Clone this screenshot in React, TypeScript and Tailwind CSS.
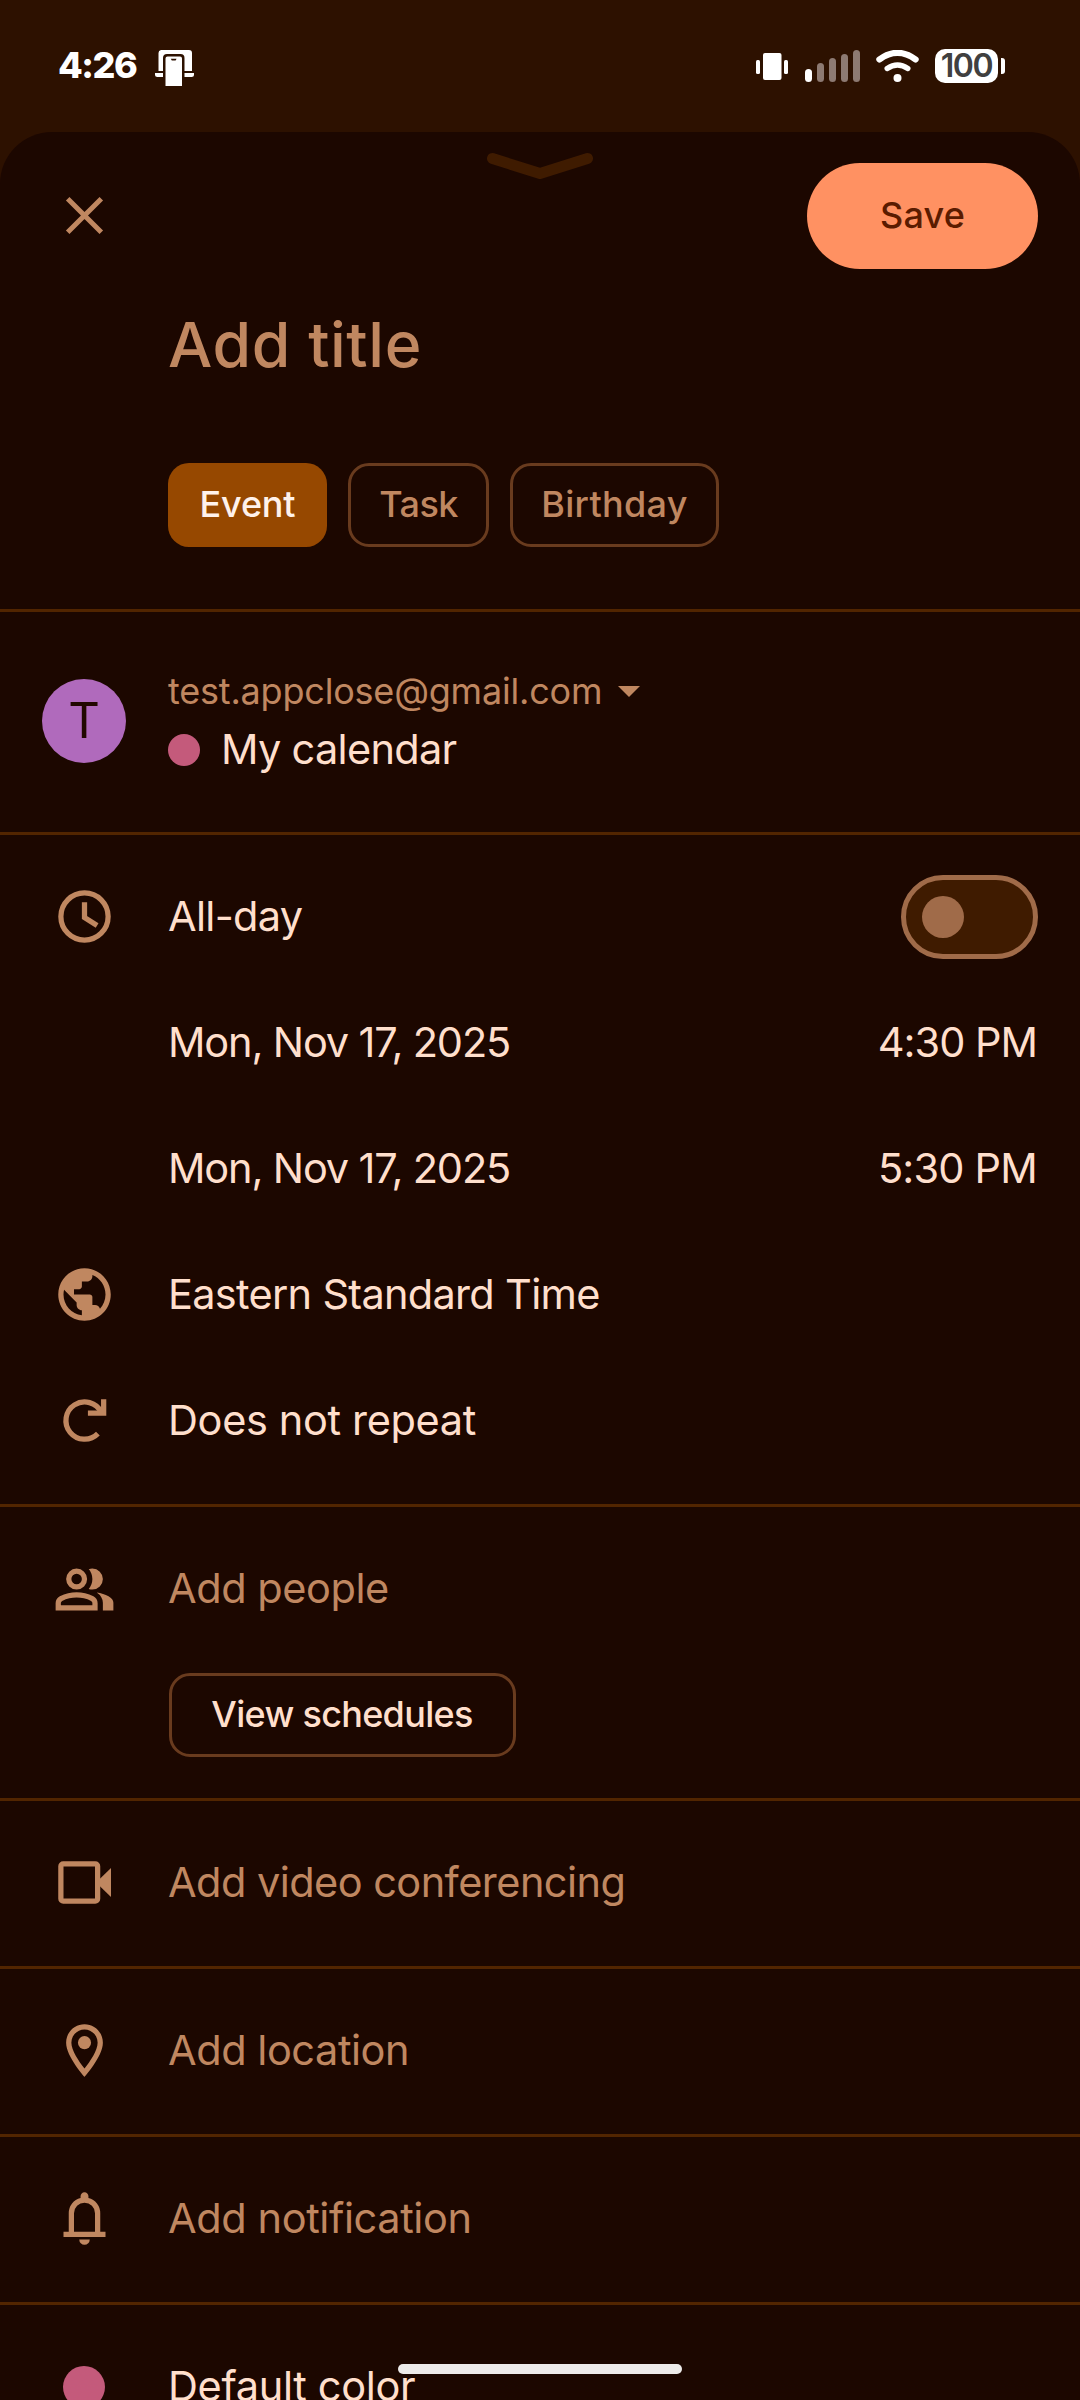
import type { ReactNode } from 'react';

const iconClass = 'block h-[63px] w-[63px] shrink-0 overflow-visible';

function FilledIcon({ d, children }: { d?: string; children?: ReactNode }) {
  return (
    <svg viewBox="0 0 24 24" className={iconClass} fill="currentColor">
      {d && <path fillRule="evenodd" d={d} />}
      {children}
    </svg>
  );
}

const ClockIcon = () => (
  <svg viewBox="0 0 24 24" className={iconClass} fill="none" stroke="currentColor" strokeWidth="2">
    <circle cx="12" cy="12" r="9" />
    <path d="M12 6.6V12.4L16.8 15.4" />
  </svg>
);

const GlobeIcon = () => (
  <FilledIcon d="M12 2C6.48 2 2 6.48 2 12s4.48 10 10 10 10-4.48 10-10S17.52 2 12 2zm-1 17.93c-3.95-.49-7-3.85-7-7.93 0-.62.08-1.21.21-1.79L9 15v1c0 1.1.9 2 2 2v1.93zm6.9-2.54c-.26-.81-1-1.39-1.9-1.39h-1v-3c0-.55-.45-1-1-1H8v-2h2c.55 0 1-.45 1-1V7h2c1.1 0 2-.9 2-2v-.41c2.93 1.19 5 4.06 5 7.41 0 2.08-.8 3.97-2.1 5.39z" />
);

const RepeatIcon = () => (
  <svg viewBox="0 0 24 24" className={iconClass} fill="none" stroke="currentColor" strokeWidth="2">
    <path d="M17.1 17A7.1 7.1 0 1 1 18.4 8.9" />
    <path d="M19.3 3.9V9.2H13.3" />
  </svg>
);

const PeopleIcon = () => (
  <FilledIcon>
    <path
      transform="translate(0 .4)"
      fillRule="evenodd"
      d="M1 20v-2.8q0-.85.438-1.562T2.6 14.55q1.55-.775 3.15-1.162T9 13t3.25.388 3.15 1.162q.725.375 1.163 1.088T17 17.2V20zm18 0v-3q0-1.1-.612-2.113T16.65 13.15q1.275.15 2.4.513t2.1.887q.9.5 1.375 1.112T23 17v3zM9 12q-1.65 0-2.825-1.175T5 8t1.175-2.825T9 4t2.825 1.175T13 8t-1.175 2.825T9 12m10-4q0 1.65-1.175 2.825T15 12q-.275 0-.7-.062T13.6 11.8q.675-.8 1.038-1.775T15 8t-.362-2.025T13.6 4.2q.35-.125.7-.163T15 4q1.65 0 2.825 1.175T19 8M3 18h12v-.8q0-.275-.137-.5t-.363-.35q-1.35-.675-2.725-1.012T9 15t-2.775.338T3.5 16.35q-.225.125-.362.35T3 17.2zm6-8q.825 0 1.413-.587T11 8t-.587-1.412T9 6t-1.412.588T7 8t.588 1.413T9 10"
    />
  </FilledIcon>
);

const VideoIcon = () => (
  <FilledIcon>
    <rect x="3" y="4.9" width="14" height="14.2" rx=".9" fill="none" stroke="currentColor" strokeWidth="2" />
    <path d="M16.4 12l5.7-5.5v11z" />
  </FilledIcon>
);

const PinIcon = () => (
  <FilledIcon d="M12 2C8.13 2 5 5.13 5 9c0 5.25 7 13 7 13s7-7.75 7-13c0-3.87-3.13-7-7-7zM7 9c0-2.76 2.24-5 5-5s5 2.24 5 5c0 2.88-2.88 7.19-5 9.88C9.92 16.21 7 11.85 7 9z">
    <circle cx="12" cy="9" r="2.5" />
  </FilledIcon>
);

const BellIcon = () => (
  <FilledIcon d="M4 19v-2h2v-7q0-2.075 1.25-3.687T10.5 4.2v-.7q0-.625.438-1.062T12 2t1.063.438T13.5 3.5v.7q2 .5 3.25 2.113T18 10v7h2v2zm8 3q-.825 0-1.412-.587T10 20h4q0 .825-.587 1.413T12 22m-4-5h8v-7q0-1.65-1.175-2.825T12 6 9.175 7.175 8 10z" />
);

function StatusBar() {
  return (
    <div className="flex h-[132px] shrink-0 items-start pl-[58px] pr-[75px] pt-[43px] text-white">
      <span className="w-[97px] text-[36px] font-extrabold leading-[44px] tracking-[-1.5px]">4:26</span>
      <svg className="mt-[7px] block h-[36px] w-[39px]" viewBox="0 0 39 36" fill="#fff">
        <path d="M6 0H34a3 3 0 0 1 3 3V21H29.500V8a4 4 0 0 0-4-4H12a4 4 0 0 0-4 4V21H3.500V3A3 3 0 0 1 6 0z" />
        <path d="M0 23H8V27H2.500A2.500 2.500 0 0 1 0 24.500zM29.500 23H39V24.500A2.500 2.500 0 0 1 36.500 27H29.500z" />
        <path fillRule="evenodd" d="M12.500 6.500H25A2 2 0 0 1 27 8.500V36H10.500V8.500A2 2 0 0 1 12.500 6.500zM15.800 8.700L16.800 10.500H20.600L21.600 8.700z" />
      </svg>
      <div className="ml-auto flex items-start">
        <svg className="mt-[9px] block h-[30px] w-[32px]" viewBox="0 0 32 30" fill="#fff">
          <rect x="0" y="8" width="4" height="14" rx="1.500" />
          <rect x="7" y="1" width="18.500" height="27" rx="2" />
          <rect x="28" y="8" width="4" height="14" rx="1.500" />
        </svg>
        <div className="ml-[17px] mt-[7px] flex h-[32px] items-end gap-[5px]">
          <div className="h-[13px] w-[7px] rounded-full bg-white" />
          <div className="h-[19px] w-[7px] rounded-full bg-[#8d7a72]" />
          <div className="h-[24px] w-[7px] rounded-full bg-[#8d7a72]" />
          <div className="h-[28px] w-[7px] rounded-full bg-[#8d7a72]" />
          <div className="h-[32px] w-[7px] rounded-full bg-[#8d7a72]" />
        </div>
        <svg className="ml-[16px] mt-[7px] block h-[32px] w-[43px]" viewBox="0 0 43 32" fill="none" stroke="#fff" strokeLinecap="round">
          <path d="M3.400 9.500Q21.500-3.800 39.600 9.500" strokeWidth="6.200" />
          <path d="M11.200 18.500Q21.500 11.500 31.800 18.500" strokeWidth="5.400" />
          <circle cx="21.500" cy="28" r="4" fill="#fff" stroke="none" />
        </svg>
        <div className="ml-[16px] mt-[6px] flex items-center">
          <div className="flex h-[34px] w-[63px] items-center justify-center rounded-[10px] bg-white text-[32px] font-semibold leading-[34px] tracking-[-1.400px] text-[#404040]">
            100
          </div>
          <div className="ml-[3px] h-[16px] w-[4px] rounded-r-[3px] bg-white" />
        </div>
      </div>
    </div>
  );
}

const Divider = () => <div className="h-[3px] shrink-0 bg-[#522500]" />;

function Row({ icon, children }: { icon?: ReactNode; children: ReactNode }) {
  return (
    <div className="flex h-[126px] items-center pl-[53px] pr-[42px] text-[41.5px]">
      <div className="w-[115px] shrink-0 text-[#c08760]">{icon}</div>
      {children}
    </div>
  );
}

const Section = ({ children }: { children: ReactNode }) => (
  <section className="shrink-0 pb-[20.5px] pt-[18.5px]">{children}</section>
);

const chip = 'flex h-[84px] items-center justify-center rounded-[21px] pb-[2px] text-[36px] font-medium';

export default function App() {
  return (
    <div className="relative flex h-[2400px] w-[1080px] flex-col overflow-hidden whitespace-nowrap bg-[#2d1100] font-['Inter',sans-serif] text-[#ffdfcc]">
      <StatusBar />
      <main className="relative flex flex-1 flex-col overflow-hidden rounded-t-[52px] bg-[#1c0700]">
        <svg className="absolute left-[487px] top-[20px] block h-[28px] w-[107px]" viewBox="0 0 107 28" fill="none">
          <path d="M5.500 6.500L53 21.500L100.500 6.500" stroke="#3f1b00" strokeWidth="11" strokeLinecap="round" strokeLinejoin="round" />
        </svg>

        <header className="flex items-start justify-between pl-[53px] pr-[42px] pt-[31px]">
          <svg viewBox="0 0 24 24" className="mt-[21px] block h-[63px] w-[63px] text-[#c08760]" fill="none" stroke="currentColor" strokeWidth="1.9">
            <path d="M5.600 5.600L18.400 18.400M18.400 5.600L5.600 18.400" />
          </svg>
          <button className="flex h-[106px] w-[231px] items-center justify-center rounded-full bg-[#ff9162] pb-[2px] text-[36px] font-medium tracking-[0.2px] text-[#5a1b00]">
            Save
          </button>
        </header>

        <h1 className="mt-[38px] h-[75px] pl-[168px] text-[62.5px] font-medium leading-[75px] tracking-[0.6px] text-[#c08760]">
          Add title
        </h1>

        <div className="mt-[81px] flex gap-[21px] pb-[62px] pl-[168px]">
          <div className={`${chip} w-[159px] bg-[#964800] tracking-[-0.2px] text-[#fff2eb]`}>Event</div>
          <div className={`${chip} w-[141px] border-[3px] border-[#693b1e] tracking-[-0.6px] text-[#c08760]`}>Task</div>
          <div className={`${chip} w-[209px] border-[3px] border-[#693b1e] tracking-[0.3px] text-[#c08760]`}>Birthday</div>
        </div>

        <Divider />
        <section className="flex h-[220px] shrink-0 pl-[42px]">
          <div className="mt-[67px] flex h-[84px] w-[84px] items-center justify-center rounded-full bg-[#b06abc] text-[49px] text-[#220800]">
            T
          </div>
          <div className="ml-[42px] pt-[56px]">
            <div className="flex h-[46px] items-center text-[36px] tracking-[-0.2px] text-[#c08760]">
              test.appclose@gmail.com
              <svg className="ml-[16px] mt-[1px] block h-[11px] w-[22px]" viewBox="0 0 22 11" fill="currentColor">
                <path d="M0 0H22L11 11z" />
              </svg>
            </div>
            <div className="mt-[6px] flex h-[58px] items-center text-[41.5px] tracking-[-0.7px]">
              <span className="mr-[21px] mt-[1px] h-[32px] w-[32px] rounded-full bg-[#c45a7b]" />
              My calendar
            </div>
          </div>
        </section>

        <Divider />
        <Section>
          <Row icon={<ClockIcon />}>
            <span className="tracking-[-0.7px]">All-day</span>
            <div className="ml-auto flex h-[84px] w-[137px] items-center rounded-full border-[5px] border-[#a06b49] bg-[#3f1b00] pl-[16px]">
              <div className="h-[42px] w-[42px] rounded-full bg-[#a06b49]" />
            </div>
          </Row>
          <Row>
            <span className="tracking-[-1.15px]">Mon, Nov 17, 2025</span>
            <span className="ml-auto mr-[1px] tracking-[-1px]">4:30 PM</span>
          </Row>
          <Row>
            <span className="tracking-[-1.15px]">Mon, Nov 17, 2025</span>
            <span className="ml-auto mr-[1px] tracking-[-0.8px]">5:30 PM</span>
          </Row>
          <Row icon={<GlobeIcon />}>
            <span className="tracking-[-0.7px]">Eastern Standard Time</span>
          </Row>
          <Row icon={<RepeatIcon />}>
            <span className="tracking-[-0.35px]">Does not repeat</span>
          </Row>
        </Section>

        <Divider />
        <section className="shrink-0 pb-[41px] pt-[18.5px]">
          <Row icon={<PeopleIcon />}>
            <span className="tracking-[-0.45px] text-[#c08760]">Add people</span>
          </Row>
          <button className="ml-[168.500px] mt-[21.5px] flex h-[84px] w-[347px] items-center justify-center rounded-[21px] border-[3px] border-[#693b1e] pb-[2px] text-[36px] font-medium tracking-[-0.7px]">
            View schedules
          </button>
        </section>

        <Divider />
        <Section>
          <Row icon={<VideoIcon />}>
            <span className="tracking-[-0.55px] text-[#c08760]">Add video conferencing</span>
          </Row>
        </Section>

        <Divider />
        <Section>
          <Row icon={<PinIcon />}>
            <span className="tracking-[-0.45px] text-[#c08760]">Add location</span>
          </Row>
        </Section>

        <Divider />
        <Section>
          <Row icon={<BellIcon />}>
            <span className="tracking-[-0.4px] text-[#c08760]">Add notification</span>
          </Row>
        </Section>

        <Divider />
        <Section>
          <Row icon={<div className="ml-[10px] h-[42px] w-[42px] rounded-full bg-[#c45a7b]" />}>
            <span className="tracking-[-0.35px]">Default color</span>
          </Row>
        </Section>
      </main>
      <div className="absolute left-[398px] top-[2364px] h-[10px] w-[284px] rounded-full bg-[#edebea]" />
    </div>
  );
}
